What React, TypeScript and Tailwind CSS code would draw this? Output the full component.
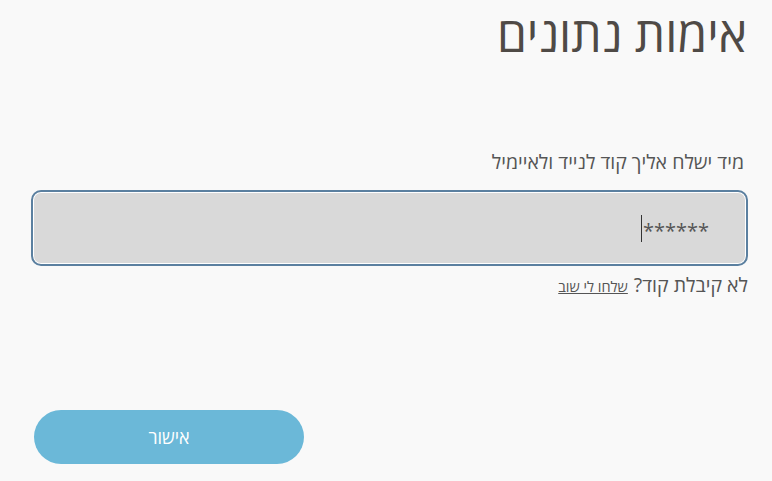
import React from "react";

export default function App() {
  return (
    <div
      dir="rtl"
      className="w-full h-[481px] bg-[#f9f9f9] overflow-hidden"
      style={{ fontFamily: '"Open Sans", "DejaVu Sans", sans-serif' }}
    >
      <div className="flex flex-col pr-[24px] pl-[31px]">
        <h1 className="text-[48px] leading-[64px] text-[#4f4a46] mt-[2px] pr-[1px] font-normal">
          אימות נתונים
        </h1>
        <p className="mt-[83px] text-[19.5px] leading-[26px] text-[#555] pr-[4px]">
          מיד ישלח אליך קוד לנייד ולאיימיל
        </p>
        <div className="mt-[15px] h-[76px] rounded-[10px] border-2 border-[#5b80a0] bg-[#d9d9d9] shadow-[inset_0_0_0_1px_#ffffff] flex items-center pr-[37px]">
          <span className="text-[20px] text-[#555] pt-[6px]">******</span>
          <span className="w-px h-[27px] bg-[#333] mr-[1px]"></span>
        </div>
        <div className="mt-[4px] flex items-baseline gap-[6px]">
          <span className="text-[19.5px] text-[#555]">לא קיבלת קוד?</span>
          <span className="text-[14.5px] text-[#555] underline">שלחו לי שוב</span>
        </div>
      </div>
      <div className="flex justify-end pl-[34px] mt-[111px]">
        <button className="w-[270px] h-[54px] rounded-full bg-[#6bb8d8] text-white text-[18px]">
          אישור
        </button>
      </div>
    </div>
  );
}
